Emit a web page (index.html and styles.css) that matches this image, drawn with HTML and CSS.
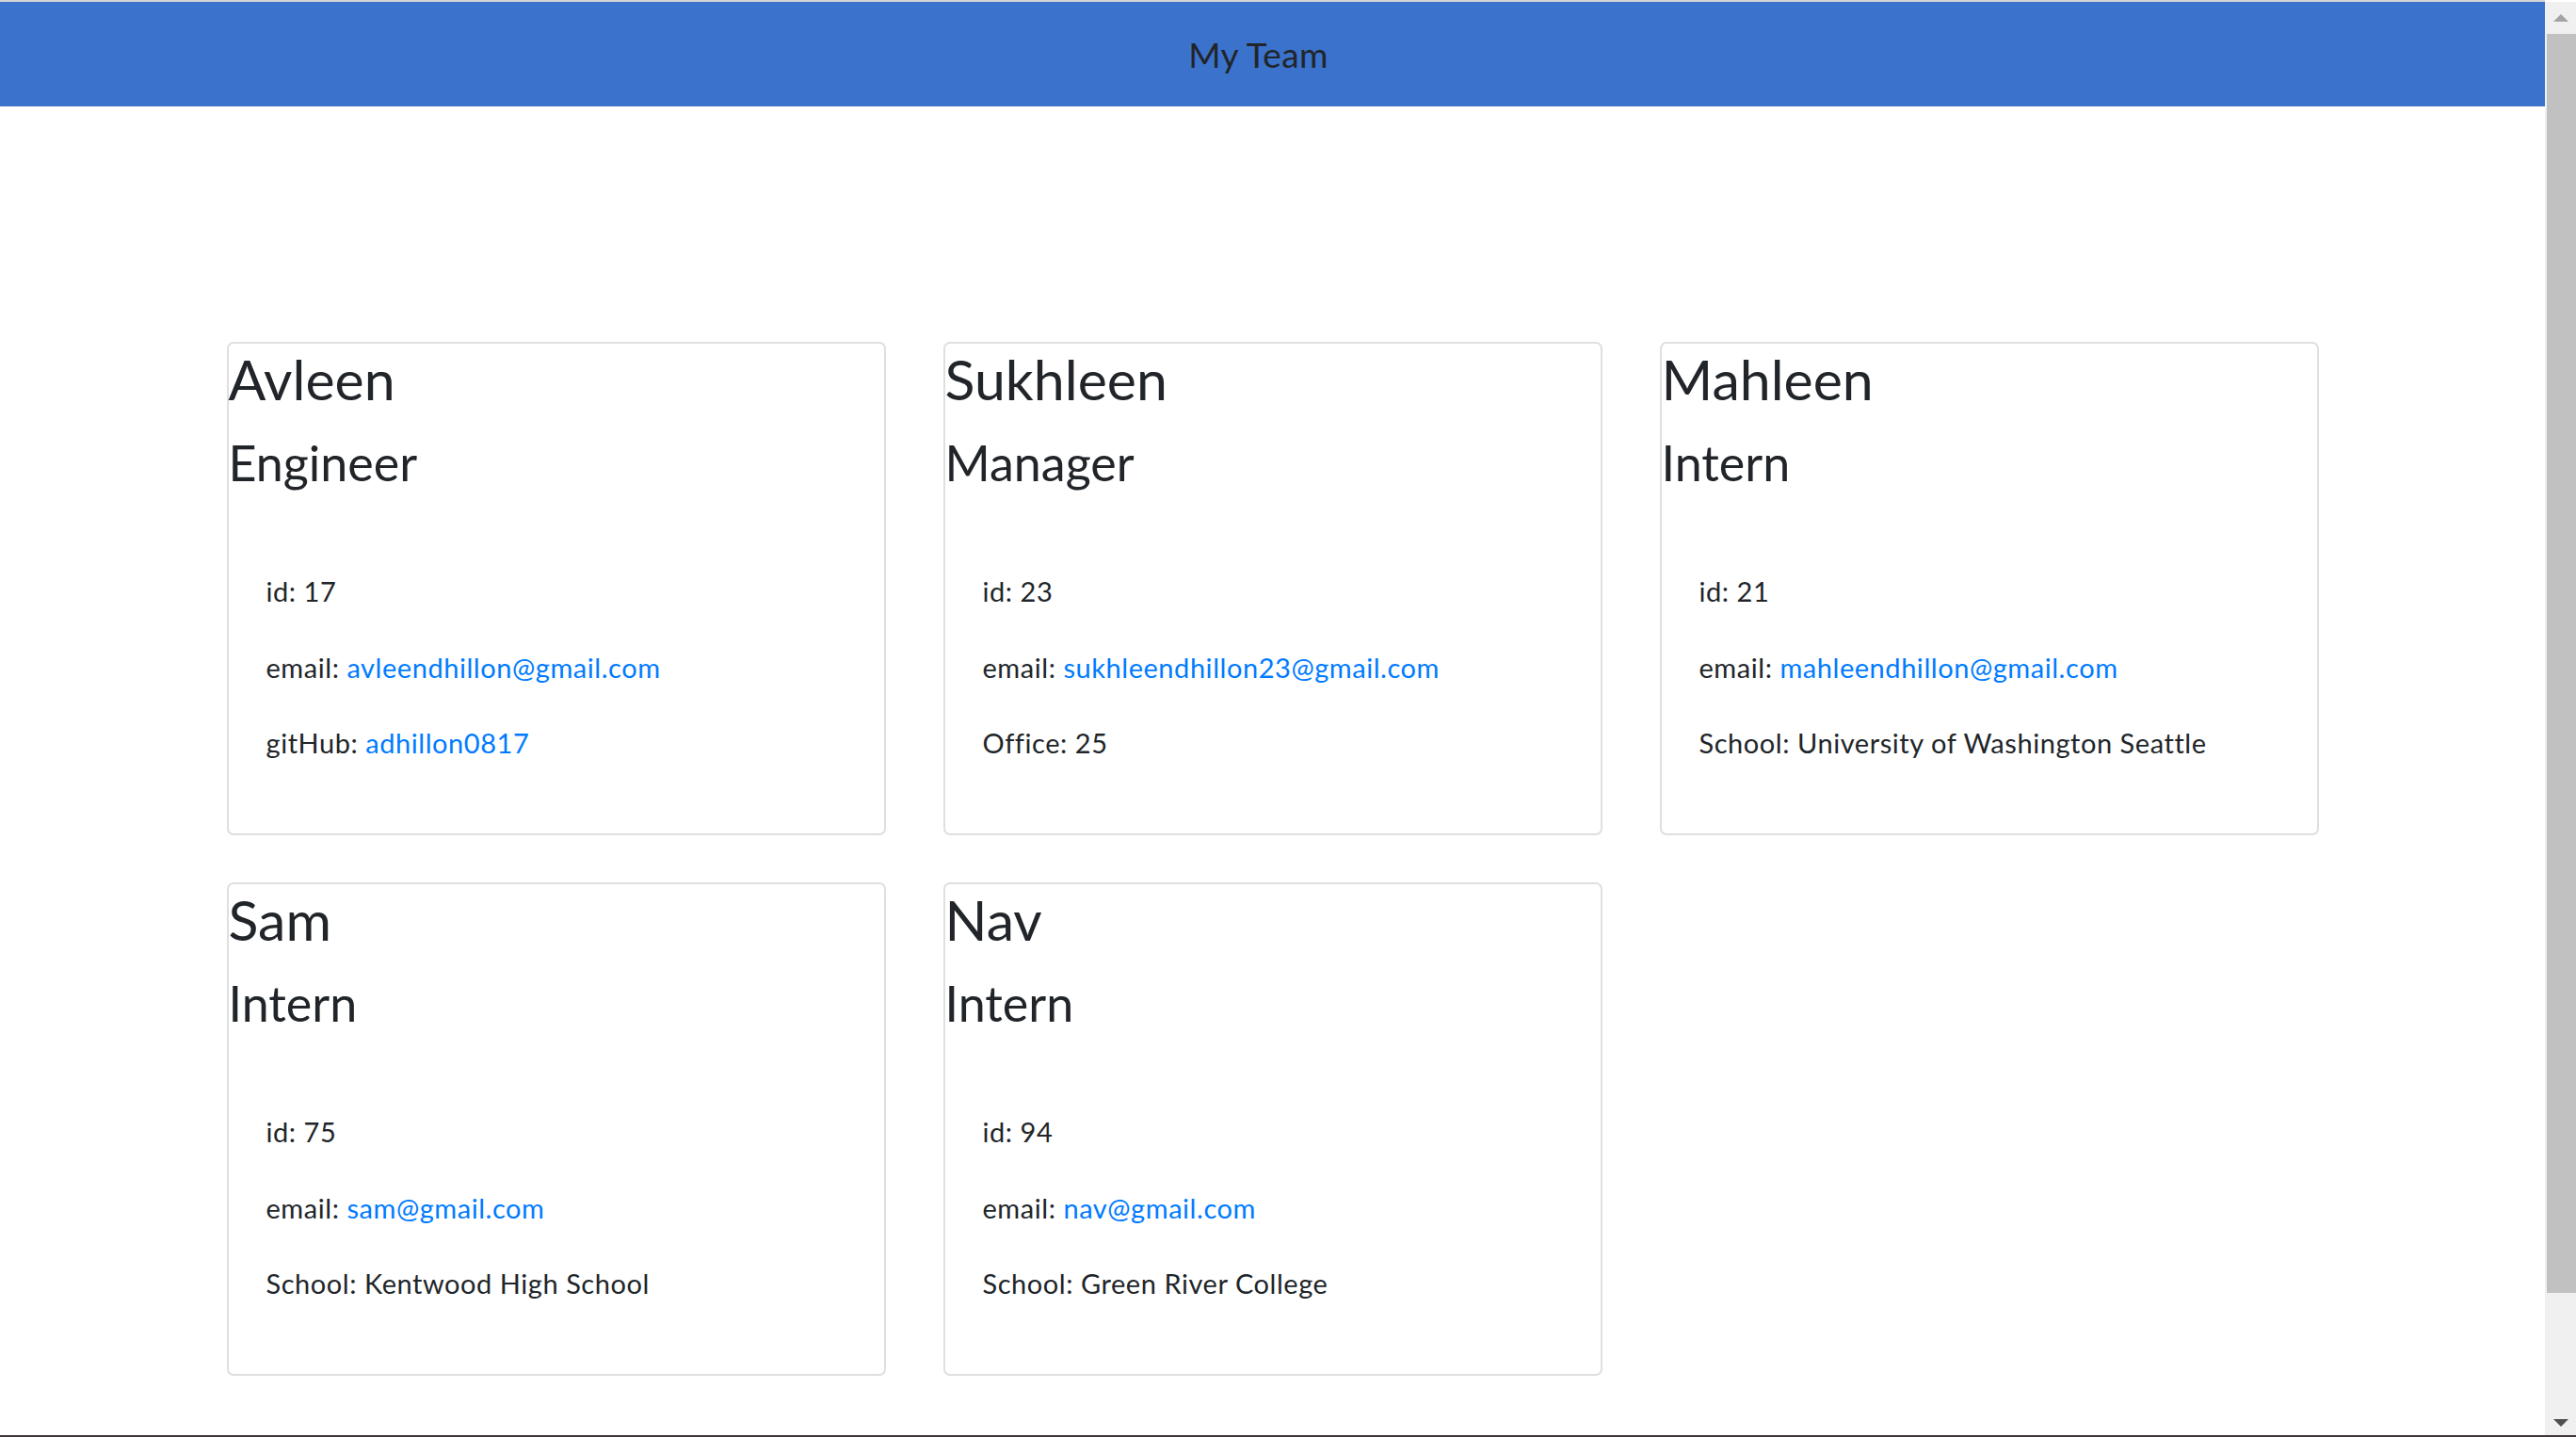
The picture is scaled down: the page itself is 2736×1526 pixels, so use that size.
FILE: index.html
```html
<!DOCTYPE html>
<html lang="en">
<head>
<meta charset="utf-8">
<title>My Team</title>
<link rel="stylesheet" href="styles.css">
</head>
<body>
<div class="page">
  <header class="topbar">
    <span class="topbar-title">My Team</span>
  </header>
  <main class="team">
    <section class="card">
      <h2 class="card-name">Avleen</h2>
      <h3 class="card-role">Engineer</h3>
      <ul class="card-list">
        <li>id: 17</li>
        <li>email: <a href="#">avleendhillon@gmail.com</a></li>
        <li>gitHub: <a href="#">adhillon0817</a></li>
      </ul>
    </section>
    <section class="card">
      <h2 class="card-name">Sukhleen</h2>
      <h3 class="card-role">Manager</h3>
      <ul class="card-list">
        <li>id: 23</li>
        <li>email: <a href="#">sukhleendhillon23@gmail.com</a></li>
        <li>Office: 25</li>
      </ul>
    </section>
    <section class="card">
      <h2 class="card-name">Mahleen</h2>
      <h3 class="card-role">Intern</h3>
      <ul class="card-list">
        <li>id: 21</li>
        <li>email: <a href="#">mahleendhillon@gmail.com</a></li>
        <li>School: University of Washington Seattle</li>
      </ul>
    </section>
    <section class="card">
      <h2 class="card-name">Sam</h2>
      <h3 class="card-role">Intern</h3>
      <ul class="card-list">
        <li>id: 75</li>
        <li>email: <a href="#">sam@gmail.com</a></li>
        <li>School: Kentwood High School</li>
      </ul>
    </section>
    <section class="card">
      <h2 class="card-name">Nav</h2>
      <h3 class="card-role">Intern</h3>
      <ul class="card-list">
        <li>id: 94</li>
        <li>email: <a href="#">nav@gmail.com</a></li>
        <li>School: Green River College</li>
      </ul>
    </section>
  </main>
</div>
<div class="scrollbar">
  <div class="scroll-btn"><span class="arrow-up"></span></div>
  <div class="scroll-track"><div class="scroll-thumb"></div></div>
  <div class="scroll-btn"><span class="arrow-down"></span></div>
</div>
<div class="frame-bottom"></div>
</body>
</html>
```

FILE: styles.css
```css
html, body {
  margin: 0;
  padding: 0;
  height: 100%;
  overflow: hidden;
}

body {
  font-family: Lato, "Liberation Sans", sans-serif;
  color: #212529;
  background: #ffffff;
}

.page {
  margin-right: 33px;
  border-top: 2px solid #d4d4d4;
}

.topbar {
  height: 111px;
  background: #3b72cc;
  display: flex;
  align-items: center;
  justify-content: center;
  padding-right: 30px;
}

.topbar-title {
  font-size: 37px;
  color: #212529;
  letter-spacing: 0.3px;
}

.team {
  display: grid;
  grid-template-columns: repeat(3, 700px);
  grid-auto-rows: 524px;
  column-gap: 61px;
  row-gap: 50px;
  justify-content: center;
  padding-top: 250px;
}

.card {
  box-sizing: border-box;
  border: 2px solid #dfdfdf;
  border-radius: 7px;
  background: #fff;
}

.card-name {
  margin: 4px 0 0 0;
  font-size: 59px;
  font-weight: 400;
  line-height: 67px;
}

.card-role {
  margin: 26px 0 0 0;
  font-size: 52px;
  font-weight: 400;
  line-height: 59px;
}

.card-list {
  list-style: none;
  margin: 90px 0 0 0;
  padding: 0 0 0 40px;
  font-size: 29px;
  letter-spacing: 0.55px;
  line-height: 34px;
}

.card-list li {
  margin-bottom: 46.5px;
}

.card-list a {
  color: #007bff;
  text-decoration: none;
}

.scrollbar {
  position: fixed;
  top: 2px;
  right: 0;
  bottom: 0;
  width: 33px;
  background: #f0f0f0;
  display: flex;
  flex-direction: column;
}

.scroll-btn {
  height: 34px;
  display: flex;
  align-items: center;
  justify-content: center;
}

.arrow-up {
  width: 0;
  height: 0;
  border-left: 8px solid transparent;
  border-right: 8px solid transparent;
  border-bottom: 8px solid #a3a3a3;
}

.arrow-down {
  width: 0;
  height: 0;
  border-left: 8px solid transparent;
  border-right: 8px solid transparent;
  border-top: 8px solid #505050;
  margin-top: 4px;
}

.scroll-track {
  flex: 1;
  padding-left: 2px;
}

.scroll-thumb {
  height: 1337px;
  background: #c1c1c1;
}

.frame-bottom {
  position: fixed;
  left: 0;
  right: 0;
  bottom: 0;
  height: 2px;
  background: #40383a;
}
```
